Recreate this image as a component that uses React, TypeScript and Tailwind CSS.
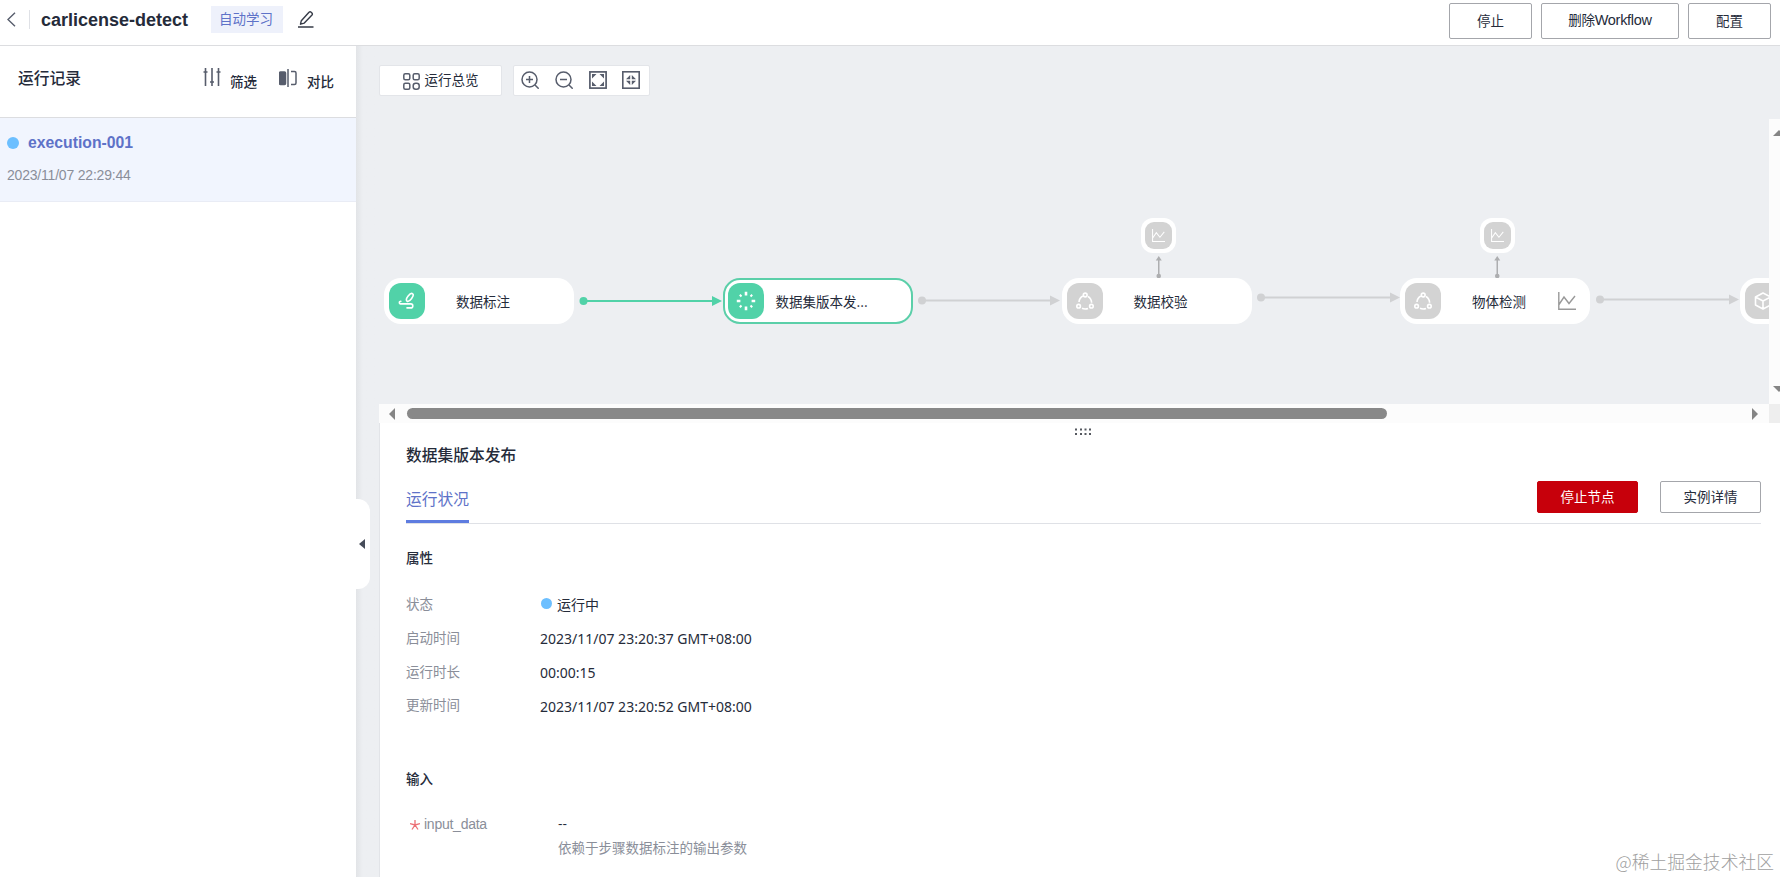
import type { ReactNode } from 'react';
import clsx from 'clsx';

type NodeStatus = 'done' | 'running' | 'pending';
type NodeKind = 'label' | 'publish' | 'process' | 'model';

interface FlowNode {
  id: string;
  name?: string;
  kind: NodeKind;
  status: NodeStatus;
  x: number;
  metric?: boolean;
  chart?: boolean;
}

interface Edge {
  from: number;
  to: number;
  y: number;
  active?: boolean;
}

// Coordinates are relative to the canvas viewport
const NODES: FlowNode[] = [
  { id: 'label', name: '数据标注', kind: 'label', status: 'done', x: 5 },
  { id: 'publish', name: '数据集版本发...', kind: 'publish', status: 'running', x: 343.5 },
  { id: 'check', name: '数据校验', kind: 'process', status: 'pending', x: 682.5, metric: true },
  { id: 'detect', name: '物体检测', kind: 'process', status: 'pending', x: 1021, metric: true, chart: true },
  { id: 'model', kind: 'model', status: 'pending', x: 1361 },
];

const EDGES: Edge[] = [
  { from: 204.5, to: 343, y: 182, active: true },
  { from: 543, to: 681, y: 181.5 },
  { from: 882, to: 1021, y: 178.5 },
  { from: 1221, to: 1360, y: 180.5 },
];

const PROPS = [
  { label: '状态', value: '运行中', dot: true },
  { label: '启动时间', value: '2023/11/07 23:20:37 GMT+08:00' },
  { label: '运行时长', value: '00:00:15' },
  { label: '更新时间', value: '2023/11/07 23:20:52 GMT+08:00' },
];

function ChartIcon({ className }: { className?: string }) {
  return (
    <svg viewBox="0 0 18 18" className={className} fill="none" stroke="currentColor" strokeWidth="1.4">
      <path d="M.8 0v17.2H18M1 12.5 6 5l5 6.5L17 4" />
    </svg>
  );
}

function KindIcon({ kind }: { kind: NodeKind }) {
  if (kind === 'label') {
    return (
      <svg viewBox="0 0 18 18" className="size-[18px]" fill="none" stroke="white" strokeWidth="1.6" strokeLinecap="round" strokeLinejoin="round">
        <ellipse cx="11.8" cy="5.4" rx="2.1" ry="4.6" transform="rotate(38 11.8 5.4)" />
        <path d="M2.8 9.300a1.300 1.300 0 0 0-.3 2.600h10.300a2 2 0 0 1 0 4H9" />
      </svg>
    );
  }
  if (kind === 'publish') {
    return (
      <svg viewBox="0 0 20 20" className="size-5" fill="none" stroke="white" strokeWidth="2.6">
        <path d="M10 .8v3.6M10 15.6v3.6M.8 10h3.6M15.6 10h3.6" />
        <path d="m3.8 3.8 1.700 1.700M14.500 14.500l1.700 1.700M3.800 16.200l1.700-1.700M14.500 5.500l1.700-1.700" strokeWidth="2" />
      </svg>
    );
  }
  if (kind === 'process') {
    return (
      <svg viewBox="0 0 18 18" className="size-[18px]" fill="none" stroke="white" strokeWidth="1.6">
        <circle cx="9.2" cy="3" r="1.9" />
        <circle cx="2.6" cy="14.2" r="1.8" />
        <circle cx="15.4" cy="14.2" r="1.8" />
        <path d="M6.8 4C4.600 5.200 3.200 7.200 3 10M12 4.500c2.300 1.400 3.500 3.400 3.600 6.200M6 16.300c2 .9 4 1 6 .2" />
      </svg>
    );
  }
  return (
    <svg viewBox="0 0 18 18" className="size-[18px]" fill="none" stroke="white" strokeWidth="1.6" strokeLinejoin="round">
      <path d="m9 1 7.500 4v8L9 17l-7.500-4V5zM1.500 5 9 9l7.500-4M9 9v8" />
    </svg>
  );
}

function Node({ node }: { node: FlowNode }) {
  const running = node.status === 'running';
  return (
    <div
      className={clsx(
        'absolute top-[159px] flex h-[46px] w-[190px] items-center rounded-[17px] bg-white',
        running ? 'border-2 border-[#5bcfa9] pl-[3px]' : 'pl-[5px]',
      )}
      style={{ left: node.x }}
    >
      <div
        className={clsx(
          'flex size-9 shrink-0 items-center justify-center rounded-xl',
          node.status === 'pending' ? 'bg-[#d3d3d3]' : 'bg-[#51d2a8]',
        )}
      >
        <KindIcon kind={node.kind} />
      </div>
      {node.name && (
        <span className={clsx('whitespace-nowrap pt-px', running ? 'ml-3' : 'ml-[31px]')}>{node.name}</span>
      )}
      {node.chart && <ChartIcon className="ml-auto mr-3.5 size-[18px] text-[#999]" />}
    </div>
  );
}

function EdgeLine({ edge }: { edge: Edge }) {
  return (
    <g fill={edge.active ? '#51d2a8' : '#d0d1d3'}>
      <circle cx={edge.from} cy={edge.y} r="4" />
      <rect x={edge.from} y={edge.y - 1} width={edge.to - edge.from - 8} height="2" />
      <path d={`M${edge.to} ${edge.y}l-10-5v10z`} />
    </g>
  );
}

// Small output node that hangs above its parent
function MetricNode({ x }: { x: number }) {
  return (
    <div
      className="absolute top-[99px] flex size-[35px] items-center justify-center rounded-xl bg-white"
      style={{ left: x }}
    >
      <div className="flex size-[27px] items-center justify-center rounded-[9px] bg-[#d3d3d3] text-white">
        <ChartIcon className="size-[13px]" />
      </div>
    </div>
  );
}

function Button({ children, className, danger }: { children: ReactNode; className?: string; danger?: boolean }) {
  return (
    <button
      className={clsx(
        'rounded-[2px] border pb-0.5 text-center',
        danger ? 'border-[#c7000b] bg-[#c7000b] text-white' : 'border-[#a4a6ab] bg-white text-[#252b3a]',
        className,
      )}
    >
      {children}
    </button>
  );
}

function Header() {
  return (
    <header className="flex h-[46px] shrink-0 items-start border-b border-[#dcdde0] bg-white pr-[9px]">
      <div className="flex h-[39px] items-center">
        <svg viewBox="0 0 9 15" className="ml-[7px] h-[15px] w-[9px]" fill="none" stroke="#575d6c" strokeWidth="1.4">
          <path d="m8 .8-7 6.700 7 6.700" />
        </svg>
        <div className="ml-[13px] h-[19px] w-px bg-[#dfe1e6]" />
        <h1 className="ml-[11px] w-[147px] whitespace-nowrap pt-0.5 font-['Liberation_Sans',sans-serif] text-[18px] font-bold text-[#252b3a]">
          carlicense-detect
        </h1>
        <span className="ml-[23px] flex h-[27px] w-[72px] items-center justify-center bg-[#eef1fb] pb-0.5 pr-0.5 text-[#5e72c8]">自动学习</span>
        <svg viewBox="0 0 16 17" className="ml-[15px] h-[17px] w-4" fill="none" stroke="#363b47" strokeWidth="1.4" strokeLinejoin="round">
          <path d="M0 16h15.500M2.500 13.200 3.300 9.700 11 1.200q1.100-.8 2.200.1l.7.700q.9 1 .1 2L6.300 12.100z" />
        </svg>
      </div>
      <div className="ml-auto flex gap-[9px] pt-[3px]">
        <Button className="h-9 w-[83px]">停止</Button>
        <Button className="h-9 w-[138px] tracking-[-0.3px]">
          删除<span className="font-['Liberation_Sans',sans-serif] text-[14.500px]">Workflow</span>
        </Button>
        <Button className="h-9 w-[83px]">配置</Button>
      </div>
    </header>
  );
}

function Sidebar() {
  return (
    <aside className="w-[356px] shrink-0 bg-white">
      <div className="flex h-[72px] items-center border-b border-[#dcdde0] pl-[18px] pr-[22px]">
        <h2 className="mb-[7px] text-[15.75px] font-medium">运行记录</h2>
        <svg viewBox="0 0 18 18" className="mb-2.5 ml-auto h-[18px] w-[18px]" fill="none" stroke="#575d6c" strokeWidth="1.600">
          <path d="M2.500 0v18M9 0v18M15.500 0v18M.5 4h4M7 14h4M13.500 4h4" />
        </svg>
        <span className="ml-[9px] font-medium">筛选</span>
        <svg viewBox="0 0 19 18" className="mb-2 ml-[22px] h-[18px] w-[19px]" fill="none" stroke="#575d6c" strokeWidth="1.500">
          <rect x=".5" y="3" width="6" height="12.500" rx="1" fill="#575d6c" />
          <path d="M9 0v18M12 2.500h3.500q1.500 0 1.500 1.500v10q0 1.500-1.500 1.500H12" />
        </svg>
        <span className="ml-[9px] font-medium">对比</span>
      </div>
      <div className="h-[84px] border-b border-[#e9ecf5] bg-[#f1f5fe] pl-[7px] pt-[13px] font-['Liberation_Sans',sans-serif]">
        <div className="flex h-6 items-center gap-[9px]">
          <span className="size-3 rounded-full bg-[#6cbfff]" />
          <span className="text-[15.75px] font-bold text-[#5e72c8]">execution-001</span>
        </div>
        <p className="mt-2 text-[14px] leading-6 tracking-[-0.2px] text-[#8a8e99]">2023/11/07 22:29:44</p>
      </div>
    </aside>
  );
}

function Toolbar() {
  return (
    <div className="flex h-[73px] gap-[11px] pt-[19px]">
      <div className="flex h-[31px] w-[123px] items-center justify-center rounded-[2px] border border-[#e3e5e9] bg-white">
        <svg viewBox="0 0 17 17" className="mr-[5px] mt-0.5 size-[17px]" fill="none" stroke="#575d6c" strokeWidth="1.500">
          <rect x=".8" y=".8" width="6" height="6" rx="1.500" />
          <rect x="10.200" y=".8" width="6" height="6" rx="1.500" />
          <rect x=".8" y="10.200" width="6" height="6" rx="1.500" />
          <rect x="10.200" y="10.200" width="6" height="6" rx="2.500" />
        </svg>
        <span className="pb-0.5">运行总览</span>
      </div>
      <div className="flex h-[31px] w-[137px] items-center gap-4 rounded-[2px] border border-[#e3e5e9] bg-white pb-px pl-[7px] text-[#575d6c]">
        <svg viewBox="0 0 18 18" className="size-[18px] shrink-0" fill="none" stroke="currentColor" strokeWidth="1.500">
          <circle cx="8.500" cy="8.500" r="7.500" />
          <path d="m14 14 3.700 3.700M5 8.500h7M8.500 5v7" />
        </svg>
        <svg viewBox="0 0 18 18" className="size-[18px] shrink-0" fill="none" stroke="currentColor" strokeWidth="1.500">
          <circle cx="8.500" cy="8.500" r="7.500" />
          <path d="m14 14 3.700 3.700M5 8.500h7" />
        </svg>
        <svg viewBox="0 0 18 18" className="size-[18px] shrink-0" fill="none" stroke="currentColor" strokeWidth="1.700">
          <rect x=".9" y=".9" width="16.200" height="16.200" />
          <path d="M3 3h4.500L3 7.500zM15 3v4.500L10.500 3zM3 15v-4.500L7.500 15zM15 15h-4.500l4.500-4.500z" fill="currentColor" stroke="none" />
        </svg>
        <svg viewBox="0 0 18 18" className="-ml-px size-[18px] shrink-0" fill="none" stroke="currentColor" strokeWidth="1.600">
          <rect x=".8" y=".8" width="16.400" height="16.400" />
          <path d="M8.200 8.200V4L4 8.200zM9.800 8.200V4L14 8.200zM8.200 9.800V14L4 9.800zM9.800 9.800V14L14 9.800z" fill="currentColor" stroke="none" />
        </svg>
      </div>
    </div>
  );
}

function Canvas() {
  const metrics = NODES.filter(n => n.metric);

  return (
    <div className="grid h-[304px] shrink-0 grid-cols-[1390px_11px] grid-rows-[285px_19px]">
      <div className="relative overflow-hidden">
        <svg className="absolute inset-0 h-full w-full">
          {EDGES.map(e => <EdgeLine key={e.from} edge={e} />)}
          {metrics.map(n => (
            <g key={n.id} fill="#adaeb0">
              <rect x={n.x + 96.500} y="140" width="1.500" height="18" />
              <path d={`M${n.x + 97.250} 137l-3 4.500h6z`} />
              <circle cx={n.x + 97.250} cy="157" r="2.300" />
            </g>
          ))}
        </svg>
        {NODES.map(n => <Node key={n.id} node={n} />)}
        {metrics.map(n => <MetricNode key={n.id} x={n.x + 79.500} />)}
      </div>
      {/* Vertical scrollbar, cut off by the window edge */}
      <div className="flex flex-col justify-between overflow-hidden bg-[#fcfcfc] pb-3 pl-1 pt-[11px] text-[#858585]">
        <svg viewBox="0 0 12 6" className="h-[6px] w-3" fill="currentColor"><path d="M0 6 6 0l6 6z" /></svg>
        <svg viewBox="0 0 12 6" className="h-[6px] w-3" fill="currentColor"><path d="m0 0 6 6 6-6z" /></svg>
      </div>
      <div className="flex items-center bg-[#fcfcfc] pl-2.5 pr-[11px] text-[#858585]">
        <svg viewBox="0 0 6 12" className="h-3 w-[6px]" fill="currentColor"><path d="M6 0 0 6l6 6z" /></svg>
        <div className="ml-3 h-[11px] w-[980px] rounded-full bg-[#888]" />
        <svg viewBox="0 0 6 12" className="ml-auto h-3 w-[6px]" fill="currentColor"><path d="m0 0 6 6-6 6z" /></svg>
      </div>
      <div className="bg-[#eeeeee]" />
    </div>
  );
}

function Detail() {
  return (
    <section className="relative min-h-0 flex-1 border-l border-[#e2e4e8] bg-white pl-[26px] pr-[19px]">
      {/* Drag handle */}
      <svg viewBox="0 0 17 8" className="absolute left-[695px] top-[5px] h-2 w-[17px]" fill="#55585f">
        {[0, 5, 9.5, 14].map(x => (
          <g key={x}>
            <rect x={x} y="0.5" width="2" height="2" />
            <rect x={x} y="5" width="2" height="2" />
          </g>
        ))}
      </svg>
      <h2 className="pt-[20px] text-[15.75px] font-medium leading-6">数据集版本发布</h2>
      <div className="mt-[14px] flex h-[43px] justify-between border-b border-[#dfe1e6]">
        <div className="h-[42px] border-b-[3px] border-[#5e7ce0] pt-[6px] text-[15.75px] leading-6 text-[#5e72c8]">运行状况</div>
        <div className="flex gap-[22px]">
          <Button className="h-8 w-[101px]" danger>停止节点</Button>
          <Button className="h-8 w-[101px]">实例详情</Button>
        </div>
      </div>
      <h3 className="mt-[23px] font-medium leading-5">属性</h3>
      <dl className="mt-5 grid grid-cols-[134px_1fr]">
        {PROPS.map(p => (
          <div key={p.label} className="contents">
            <dt className="h-[33.750px] leading-[33px] text-[#8a8e99]">{p.label}</dt>
            <dd className="flex h-[33.750px] items-center pt-0.5 font-['Noto_Sans','Noto_Sans_CJK_SC',sans-serif] text-[14px]">
              {p.dot && <span className="-mt-0.5 mr-[5px] ml-px size-[11px] rounded-full bg-[#6cbfff]" />}
              {p.value}
            </dd>
          </div>
        ))}
      </dl>
      <h3 className="mt-[46px] font-medium leading-5">输入</h3>
      <div className="mt-[23px] flex pl-1 leading-6">
        <div className="flex w-[148px] gap-1 pt-px font-['Liberation_Sans',sans-serif] text-[14px] tracking-[-0.25px] text-[#8a8e99]">
          <svg viewBox="0 0 10 10" className="mt-[8px] size-2.5" fill="none" stroke="#ec6f75" strokeWidth="1.300">
            <path d="M5 0v5M0 3.700 5 5l5-1.300M5 5 2 9.500M5 5l3 4.500" />
          </svg>
          input_data
        </div>
        <div>
          <p className="pt-px font-['Liberation_Sans',sans-serif]">--</p>
          <p className="-mt-px text-[#8a8e99]">依赖于步骤数据标注的输出参数</p>
        </div>
      </div>
      <span className="absolute bottom-1 right-[6px] whitespace-nowrap text-[17.800px] font-light leading-6 text-[#a0a0a0]">
        @稀土掘金技术社区
      </span>
    </section>
  );
}

export default function App() {
  return (
    <div className="flex h-[877px] w-[1780px] flex-col overflow-hidden bg-[#edeff2] font-['Noto_Sans_CJK_SC',sans-serif] text-[13.500px] text-[#252b3a]">
      <Header />
      <div className="flex min-h-0 flex-1">
        <Sidebar />
        {/* Collapse handle */}
        <div className="flex w-[23px] shrink-0 bg-linear-to-r from-[#e2e4e7] to-[#edeff2] to-30% pt-[453px]">
          <div className="flex h-[90px] w-[14px] items-center rounded-r-xl bg-white pl-[3px]">
            <svg viewBox="0 0 6 10" className="h-2.5 w-[6px]" fill="#464c59"><path d="M6 0 0 5l6 5z" /></svg>
          </div>
        </div>
        <main className="flex min-w-0 flex-1 flex-col">
          <Toolbar />
          <Canvas />
          <Detail />
        </main>
      </div>
    </div>
  );
}
